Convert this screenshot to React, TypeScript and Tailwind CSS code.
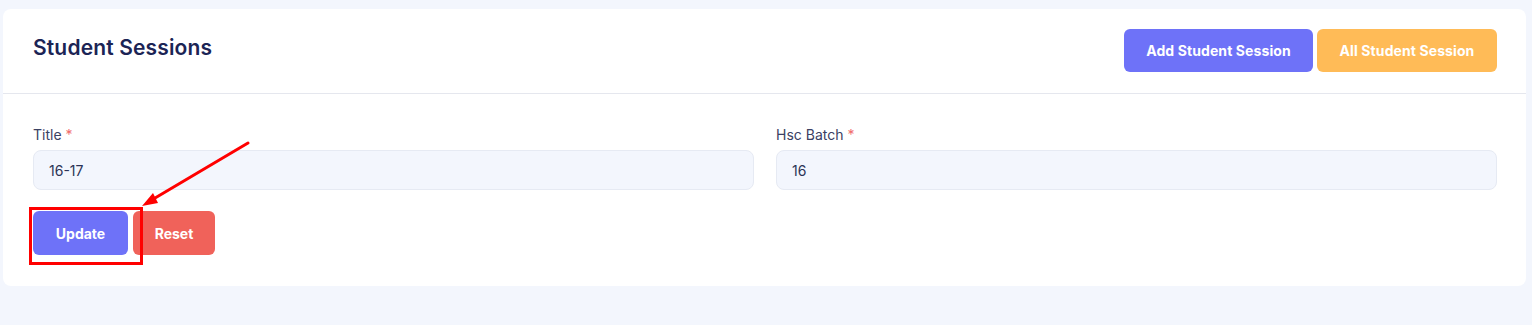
import React from "react";

export default function App() {
  return (
    <div
      className="relative w-[1532px] h-[325px] bg-[#f3f6fd] pt-[9px] pl-[3px] pr-[6px]"
      style={{ fontFamily: "Inter, 'Open Sans', sans-serif" }}
    >
      <div className="bg-white rounded-[8px] h-[277px]">
        <div className="flex items-start justify-between h-[85px] border-b border-[#e5e7ee] pl-[30px] pr-[29px]">
          <h1 className="pt-[26px] text-[21px] leading-[26px] font-semibold text-[#1b2455] tracking-[0.15px]">
            Student Sessions
          </h1>
          <div className="flex gap-[4px] pt-[20px]">
            <button className="h-[43px] w-[189px] rounded-[6px] bg-[#6e72f8] text-white text-[14px] font-bold tracking-[0.1px]">
              Add Student Session
            </button>
            <button className="h-[43px] w-[180px] rounded-[6px] bg-[#ffbb57] text-white text-[14px] font-bold tracking-[0.1px]">
              All Student Session
            </button>
          </div>
        </div>
        <div className="pl-[30px] pr-[29px] pt-[30px]">
          <div className="grid grid-cols-2 gap-x-[22px]">
            <div>
              <label className="block text-[14px] leading-[21px] text-[#3b4163]">
                Title <span className="text-[#f06b6b]">*</span>
              </label>
              <div className="mt-[5px] h-[40px] rounded-[8px] bg-[#f3f6fd] border border-[#e6eaf3] flex items-center pl-[15px] text-[14px] text-[#2c3356]">
                16-17
              </div>
            </div>
            <div>
              <label className="block text-[14px] leading-[21px] text-[#3b4163]">
                Hsc Batch <span className="text-[#f06b6b]">*</span>
              </label>
              <div className="mt-[5px] h-[40px] rounded-[8px] bg-[#f3f6fd] border border-[#e6eaf3] flex items-center pl-[15px] text-[14px] text-[#2c3356]">
                16
              </div>
            </div>
          </div>
          <div className="flex gap-[5px] mt-[21px]">
            <button className="h-[44px] w-[95px] rounded-[6px] bg-[#6e72f8] text-white text-[14px] font-bold">
              Update
            </button>
            <button className="h-[44px] w-[82px] rounded-[6px] bg-[#f0625a] text-white text-[14px] font-bold">
              Reset
            </button>
          </div>
        </div>
      </div>
      <div className="absolute left-[29px] top-[207px] w-[114px] h-[58px] border-[3px] border-[#ff0000]" />
      <svg className="absolute left-0 top-0" width="1532" height="325" viewBox="0 0 1532 325">
        <line x1="248" y1="143" x2="150" y2="201" stroke="#ff0000" strokeWidth="3" strokeLinecap="round" />
        <polygon points="142,206 153,193 158,203" fill="#ff0000" />
      </svg>
    </div>
  );
}
